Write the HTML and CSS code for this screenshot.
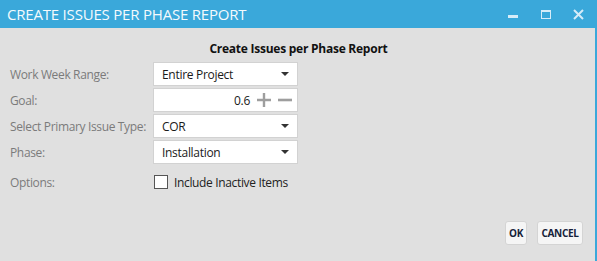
FILE: index.html
```html
<!DOCTYPE html>
<html>
<head>
<meta charset="utf-8">
<link rel="stylesheet" href="styles.css">
</head>
<body>
<div class="window">
  <div class="titlebar">
    <span class="title">CREATE ISSUES PER PHASE REPORT</span>
    <div class="controls">
      <div class="ctrl"><svg width="10" height="10" viewBox="0 0 10 10"><rect x="0" y="6" width="10" height="3" fill="#d6ecf8"/></svg></div>
      <div class="ctrl"><svg width="10" height="9" viewBox="0 0 10 9"><rect x="0.5" y="0.5" width="9" height="8" fill="none" stroke="#d6ecf8"/><rect x="0" y="0" width="10" height="2" fill="#d6ecf8"/></svg></div>
      <div class="ctrl"><svg width="11" height="11" viewBox="0 0 11 11"><path d="M1 1L10 10M10 1L1 10" stroke="#d6ecf8" stroke-width="2"/></svg></div>
    </div>
  </div>
  <div class="content">
    <div class="heading">Create Issues per Phase Report</div>
    <div class="form">
      <div class="label">Work Week Range:</div>
      <div class="field select"><span>Entire Project</span><span class="arrow"></span></div>
      <div class="label">Goal:</div>
      <div class="field numeric"><span class="num">0.6</span>
        <svg class="pm" width="14" height="14" viewBox="0 0 14 14"><path d="M0 7H14M7 0V14" stroke="#9e9e9e" stroke-width="2.4"/></svg>
        <svg class="pm" width="14" height="14" viewBox="0 0 14 14"><path d="M0 7H14" stroke="#9e9e9e" stroke-width="2.6"/></svg>
      </div>
      <div class="label">Select Primary Issue Type:</div>
      <div class="field select"><span>COR</span><span class="arrow"></span></div>
      <div class="label">Phase:</div>
      <div class="field select"><span>Installation</span><span class="arrow"></span></div>
      <div class="label options">Options:</div>
      <label class="check options"><span class="box"></span><span>Include Inactive Items</span></label>
    </div>
    <div class="actions">
      <button class="btn btn-ok">OK</button>
      <button class="btn btn-cancel">CANCEL</button>
    </div>
  </div>
</div>
</body>
</html>
```

FILE: styles.css
```css
html, body {
  margin: 0;
  padding: 0;
}
body {
  font-family: "Open Sans", "Noto Sans", sans-serif;
  background: #e0e0e0;
}
.window {
  width: 595px;
  height: 261px;
  border-right: 2px solid #3aa8da;
  display: flex;
  flex-direction: column;
  background: #e0e0e0;
}
.titlebar {
  height: 28px;
  background: #3aa8da;
  display: flex;
  align-items: center;
  justify-content: space-between;
  padding-left: 7px;
}
.title {
  color: #f4fafd;
  font-size: 15px;
  font-weight: 400;
  letter-spacing: -0.2px;
  line-height: 28px;
}
.controls {
  display: flex;
  height: 28px;
}
.ctrl {
  width: 33px;
  display: flex;
  align-items: center;
  justify-content: center;
}
.content {
  flex: 1;
  display: flex;
  flex-direction: column;
}
.heading {
  text-align: center;
  font-weight: 700;
  font-size: 12px;
  letter-spacing: -0.25px;
  line-height: 16px;
  color: #111;
  margin-top: 13px;
  padding-left: 2px;
}
.form {
  display: grid;
  grid-template-columns: 143px 145px;
  grid-auto-rows: 24px;
  row-gap: 2px;
  padding-left: 10px;
  margin-top: 5px;
}
.label {
  font-size: 12px;
  letter-spacing: -0.35px;
  white-space: nowrap;
  color: #7b7b7b;
  display: flex;
  align-items: center;
}
.field {
  background: #fff;
  border: 1px solid #d2d2d2;
  box-sizing: border-box;
  display: flex;
  align-items: center;
  font-size: 12px;
  letter-spacing: -0.3px;
  color: #1a1a1a;
}
.select {
  justify-content: space-between;
  padding: 0 8px 0 8px;
}
.arrow {
  width: 0;
  height: 0;
  border-left: 4px solid transparent;
  border-right: 4px solid transparent;
  border-top: 4px solid #333;
}
.numeric {
  justify-content: flex-end;
  padding-right: 5px;
}
.num {
  margin-right: 7px;
}
.pm {
  margin-left: 7px;
}
.pm:first-of-type {
  margin-left: 0;
}
.options {
  margin-top: 8px;
}
.check {
  display: flex;
  align-items: center;
  font-size: 12px;
  letter-spacing: -0.35px;
  color: #222;
}
.box {
  width: 12px;
  height: 12px;
  border: 1px solid #555;
  background: #fff;
  margin-left: 1px;
  margin-right: 6px;
}
.actions {
  display: flex;
  justify-content: flex-end;
  gap: 10px;
  margin-top: auto;
  padding-right: 12px;
  margin-bottom: 16px;
}
.btn {
  height: 24px;
  padding: 0;
  background: #f5f5f5;
  border: 1px solid #d4d4d4;
  border-radius: 3px;
  font-family: "Open Sans", "Noto Sans", sans-serif;
  font-weight: 700;
  font-size: 10px;
  letter-spacing: -0.3px;
  color: #15223a;
}
.btn-ok {
  width: 22px;
}
.btn-cancel {
  width: 46px;
}
```
